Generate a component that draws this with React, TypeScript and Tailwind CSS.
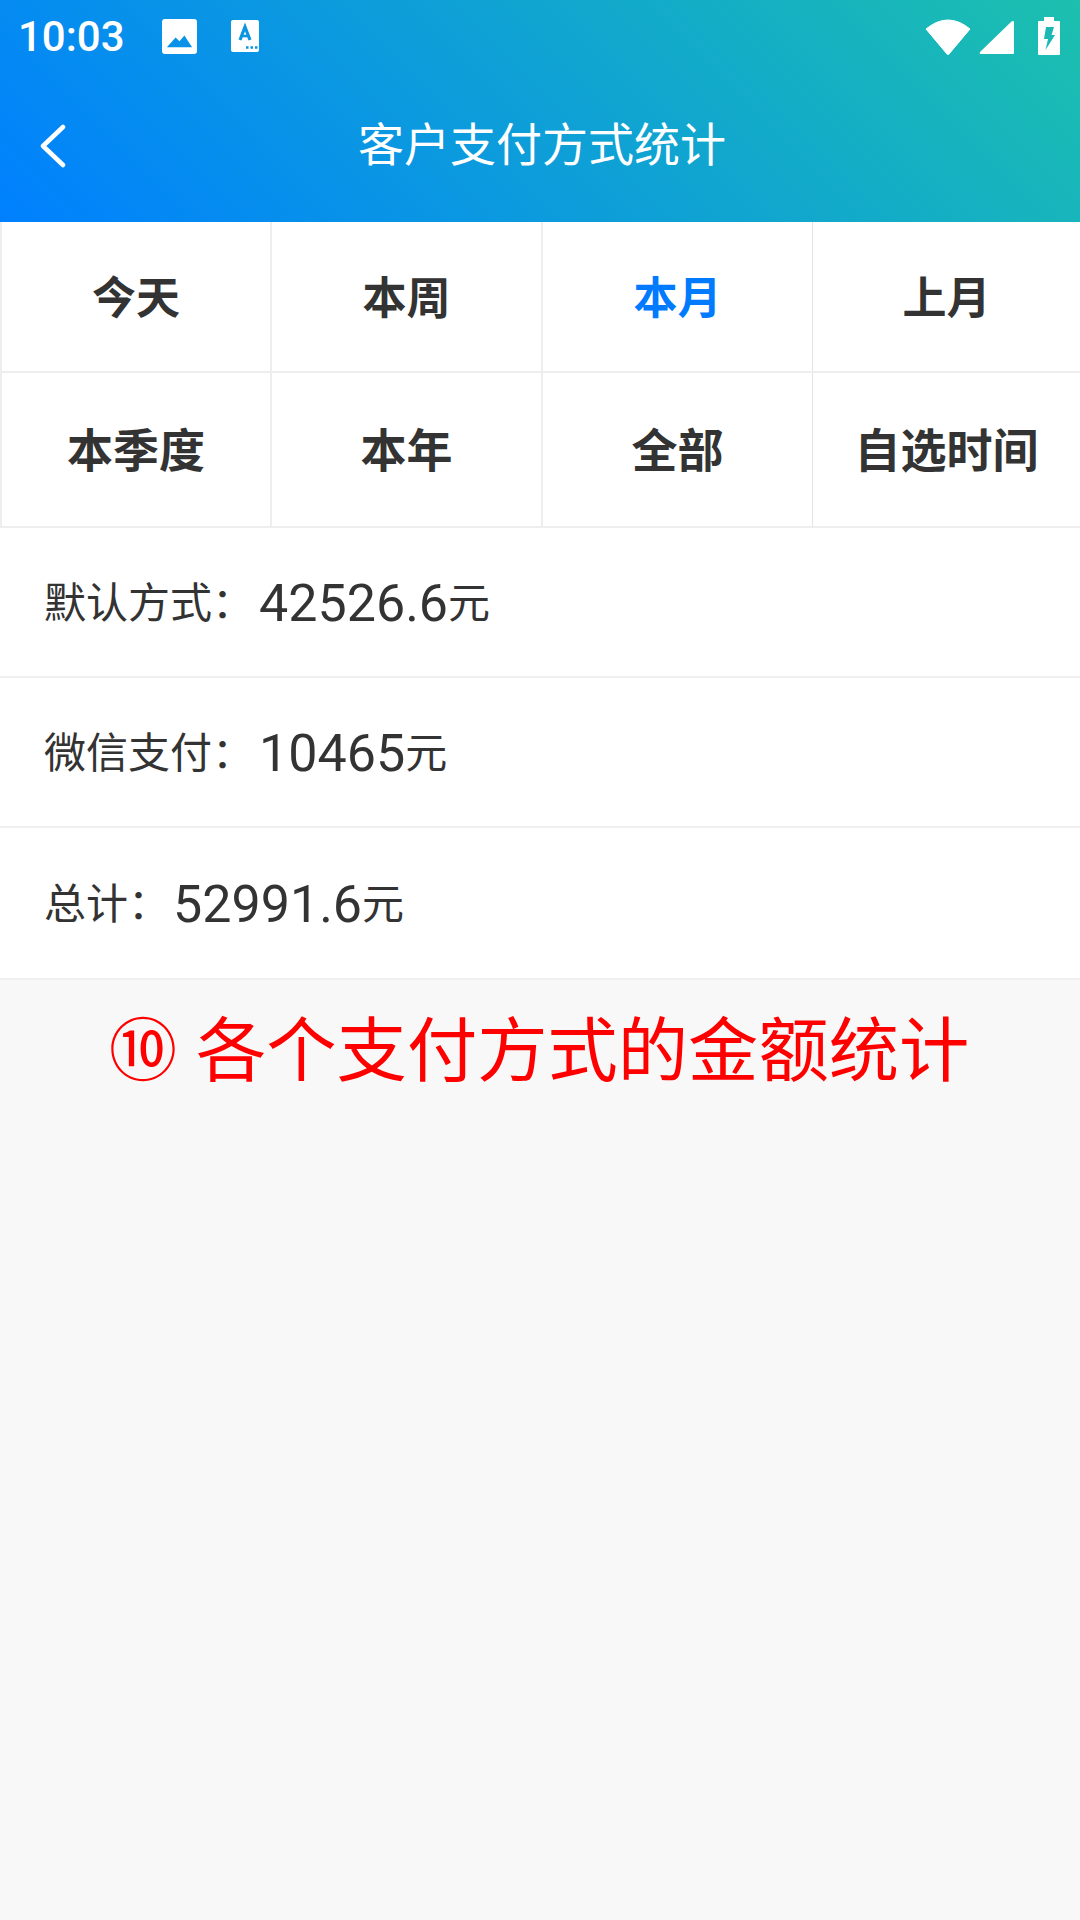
import React from 'react';

const cjk = "font-['Roboto','Noto_Sans_CJK_SC',sans-serif]";

function StatusIcons() {
  return (
    <div className="flex items-center">
      <svg width="46" height="38" viewBox="0 0 46 38" className="mr-[8px]">
        <path d="M1 12 Q23 -6 45 12 L24 37 Q23 38 22 37 Z" fill="white" stroke="white" strokeWidth="1" strokeLinejoin="round" />
      </svg>
      <svg width="36" height="36" viewBox="0 0 36 36" className="mr-[22px] mt-[3px]">
        <path d="M34 1 Q35 1 35 2 L35 33 Q35 34 34 34 L2 34 Q0 34 1 32 L32 2 Q33 1 34 1 Z" fill="white" />
      </svg>
      <svg width="24" height="40" viewBox="0 0 24 40">
        <path d="M7 1 H17 V5 H22 Q23 5 23 6 V38 Q23 39 22 39 H2 Q1 39 1 38 V6 Q1 5 2 5 H7 Z" fill="white" />
        <path d="M9 11 H17 L14.5 19 H18 L8.5 34 L11 23 H7 Z" fill="#1bb8b6" />
      </svg>
    </div>
  );
}

function Cell({ label, active, tall, edge }: { label: string; active?: boolean; tall?: boolean; edge: string }) {
  return (
    <div className={`flex items-center justify-center border-b-2 border-b-[#eeeeee] font-bold ${edge} ${tall ? 'pt-[3px] text-[46px]' : 'pt-[5px] text-[44px]'} ${active ? 'text-[#007aff]' : 'text-[#333333]'}`}>
      {label}
    </div>
  );
}

function StatRow({ label, value, height, gap }: { label: string; value: string; height: string; gap: string }) {
  return (
    <div className={`flex items-center border-b-2 border-[#f0f0f0] bg-white pl-[44px] pt-[3px] text-[#333333] ${height}`}>
      <span className={`text-[42px] ${gap}`}>{label}：</span>
      <span className="text-[52px]">{value}</span>
      <span className="text-[42px]">元</span>
    </div>
  );
}

const thick = 'border-r-2 border-r-[#eeeeee]';
const thin = 'border-r border-r-[#e4e4e4]';

export default function App() {
  return (
    <div className={`flex h-[1920px] w-[1080px] flex-col bg-[#f8f8f8] ${cjk}`}>
      <header className="h-[222px] bg-[linear-gradient(45deg,#0080ff,#1cc0ae)] text-white">
        <div className="flex h-[72px] items-center justify-between pl-[18px] pr-[19px]">
          <div className="flex items-center">
            <span className="w-[144px] text-[42px] font-medium">10:03</span>
            <svg width="35" height="35" viewBox="0 0 36 36" className="mr-[34px]">
              <path fillRule="evenodd" fill="white" d="M3 0 H33 Q36 0 36 3 V33 Q36 36 33 36 H3 Q0 36 0 33 V3 Q0 0 3 0 Z M5 29 H31 L23 17 L18 23 L14 19 Z" />
            </svg>
            <svg width="28" height="32" viewBox="0 0 28 32">
              <rect width="28" height="32" rx="2" fill="white" />
              <path d="M9 20 L14 7 L19 20" fill="none" stroke="#0c96e2" strokeWidth="3.2" />
              <path d="M11 16 H17" stroke="#0c96e2" strokeWidth="2.6" />
              <path d="M15 27.5 H17.5 M19.5 27.5 H22 M24 27.5 H26.5" stroke="#0c96e2" strokeWidth="2.6" />
            </svg>
          </div>
          <StatusIcons />
        </div>
        <div className="relative flex h-[146px] items-center justify-center pl-[4px] text-[46px]">
          <svg width="26" height="44" viewBox="0 0 26 44" className="absolute left-[40px] top-[52px]">
            <path d="M23 3 L3 22 L23 41" fill="none" stroke="white" strokeWidth="4.5" strokeLinecap="round" strokeLinejoin="round" />
          </svg>
          客户支付方式统计
        </div>
      </header>
      <div className="grid grid-cols-[270px_271px_270px_1fr] border-l-2 border-[#eeeeee] bg-white [grid-template-rows:151px_155px]">
        <Cell label="今天" edge={thick} />
        <Cell label="本周" edge={thick} />
        <Cell label="本月" active edge={thin} />
        <Cell label="上月" edge="" />
        <Cell label="本季度" tall edge={thick} />
        <Cell label="本年" tall edge={thick} />
        <Cell label="全部" tall edge={thin} />
        <Cell label="自选时间" tall edge="" />
      </div>
      <StatRow label="默认方式" value="42526.6" height="h-[150px]" gap="mr-[5px]" />
      <StatRow label="微信支付" value="10465" height="h-[150px]" gap="mr-[5px]" />
      <StatRow label="总计" value="52991.6" height="h-[152px]" gap="mr-[3px]" />
      <div className="flex items-center pl-[109px] pt-[24px] text-[70.3px] leading-[96px] text-[#ff0000]">
        <span className="mr-[19px] text-[68px]">⑩</span>
        <span>各个支付方式的金额统计</span>
      </div>
    </div>
  );
}
